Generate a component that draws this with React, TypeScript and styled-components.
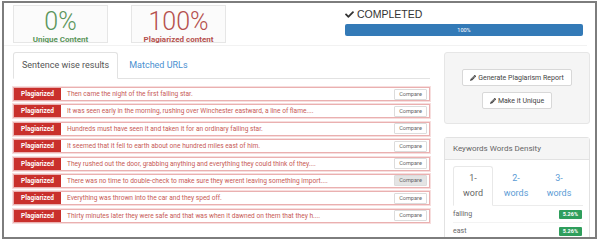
import React from "react";
import styled, { createGlobalStyle } from "styled-components";
import { FaCheck, FaPencilAlt } from "react-icons/fa";

const RED = "#c9302c";
const PINK = "#eab0b0";
const GREEN = "#5a955a";
const BLUE = "#337ab7";

const GlobalStyle = createGlobalStyle`
  html, body {
    margin: 0;
    padding: 0;
    background: #ffffff;
  }
  body {
    font-family: Roboto, "Liberation Sans", Arial, sans-serif;
    color: #555;
  }
`;

const Frame = styled.div`
  box-sizing: border-box;
  width: 595px;
  height: 238px;
  margin: 1px 0 0 2px;
  border: 2px solid #7d7d7d;
  overflow: hidden;
  background: #fff;
`;

const Header = styled.div`
  display: flex;
  align-items: flex-start;
  gap: 23px;
  height: 40px;
  padding: 2px 4px 0 9px;
  border-bottom: 1px solid #f2f2f2;
  margin-right: 8px;
`;

const StatBox = styled.div<{ $tone: string }>`
  box-sizing: border-box;
  width: 95px;
  height: 38px;
  border: 1px solid #e6e6e6;
  background: #fbfbfb;
  display: flex;
  flex-direction: column;
  align-items: center;
  color: ${(p) => p.$tone};
`;

const BigNum = styled.div`
  font-size: 25px;
  font-weight: 300;
  line-height: 25px;
  margin-top: 3px;
`;

const StatLabel = styled.div`
  font-size: 8px;
  font-weight: 700;
  line-height: 10px;
  margin-top: 1px;
`;

const Completed = styled.div`
  margin-left: auto;
  width: 238px;
  padding-top: 3px;
`;

const DoneTitle = styled.div`
  font-family: "Liberation Sans", Arial, sans-serif;
  font-size: 10.5px;
  line-height: 13px;
  color: #333;
  display: flex;
  align-items: center;
  gap: 3px;
`;

const Progress = styled.div`
  margin-top: 3px;
  height: 12px;
  border-radius: 2px;
  background: ${BLUE};
  color: #fff;
  font-size: 5.5px;
  line-height: 12px;
  text-align: center;
`;

const Main = styled.div`
  display: flex;
  gap: 14px;
  padding: 6px 3px 0 9px;
`;

const LeftCol = styled.div`
  width: 417px;
`;

const TabBar = styled.div`
  display: flex;
  border-bottom: 1px solid #e2e2e2;
  height: 26px;
`;

const Tab = styled.div<{ $active?: boolean }>`
  box-sizing: border-box;
  height: 27px;
  padding: 0 8px;
  font-size: 9px;
  line-height: 25px;
  margin-right: 2px;
  border: 1px solid ${(p) => (p.$active ? "#e2e2e2" : "transparent")};
  border-bottom-color: ${(p) => (p.$active ? "#fff" : "transparent")};
  background: ${(p) => (p.$active ? "#fff" : "transparent")};
  color: ${(p) => (p.$active ? "#555" : "#4a90d0")};
  border-radius: 3px 3px 0 0;
`;

const Rows = styled.div`
  display: flex;
  flex-direction: column;
  gap: 3.4px;
  margin-top: 8px;
`;

const Row = styled.div`
  box-sizing: border-box;
  height: 14px;
  display: flex;
  align-items: center;
  border: 1px solid ${PINK};
  box-shadow: 0 0 0 1px #f7dede;
  background: #fff;
`;

const Tag = styled.div`
  box-sizing: border-box;
  width: 47px;
  height: 100%;
  flex-shrink: 0;
  background: ${RED};
  color: #fff;
  font-size: 6.5px;
  font-weight: 700;
  line-height: 12px;
  text-align: center;
`;

const Sentence = styled.div`
  flex: 1;
  padding-left: 6px;
  font-size: 6.6px;
  color: #c75a56;
  white-space: nowrap;
  overflow: hidden;
`;

const CompareBtn = styled.div<{ $hover?: boolean }>`
  box-sizing: border-box;
  height: 11px;
  width: 33px;
  margin-right: 2px;
  border: 1px solid #dcdcdc;
  border-radius: 1px;
  background: ${(p) => (p.$hover ? "#e4e4e4" : "#fff")};
  color: #666;
  font-size: 5.6px;
  line-height: 9px;
  text-align: center;
`;

const RightCol = styled.div`
  width: 146px;
  display: flex;
  flex-direction: column;
  gap: 13px;
`;

const Well = styled.div`
  box-sizing: border-box;
  height: 72px;
  border: 1px solid #e6e6e6;
  border-radius: 3px;
  background: #f5f5f5;
  display: flex;
  flex-direction: column;
  align-items: center;
  padding-top: 16px;
  gap: 6px;
`;

const ActionBtn = styled.div`
  box-sizing: border-box;
  height: 17px;
  padding: 0 7px;
  display: flex;
  align-items: center;
  gap: 2px;
  background: #fff;
  border: 1px solid #d8d8d8;
  border-radius: 2px;
  font-size: 7px;
  color: #444;
`;

const Panel = styled.div`
  box-sizing: border-box;
  border: 1px solid #e2e2e2;
  border-radius: 3px;
  height: 120px;
`;

const PanelHead = styled.div`
  height: 21px;
  background: #f5f5f5;
  border-bottom: 1px solid #e2e2e2;
  padding-left: 8px;
  font-size: 8px;
  line-height: 21px;
  color: #666;
`;

const PanelBody = styled.div`
  padding: 6px 6px 0 8px;
`;

const KwTabs = styled.div`
  display: flex;
  border-bottom: 1px solid #ececec;
  height: 39px;
`;

const KwTab = styled.div<{ $active?: boolean }>`
  box-sizing: border-box;
  width: 40px;
  height: 40px;
  margin-right: 3px;
  padding-top: 4px;
  font-size: 9px;
  line-height: 15px;
  text-align: center;
  border: 1px solid ${(p) => (p.$active ? "#e8e8e8" : "transparent")};
  border-bottom-color: ${(p) => (p.$active ? "#fff" : "transparent")};
  border-radius: 3px 3px 0 0;
  background: ${(p) => (p.$active ? "#fff" : "transparent")};
  color: ${(p) => (p.$active ? "#666" : "#5b9bd5")};
`;

const KwRow = styled.div`
  display: flex;
  align-items: center;
  justify-content: space-between;
  height: 16px;
  font-size: 7px;
  color: #666;
  border-bottom: 1px solid #f3f3f3;
`;

const Badge = styled.span`
  background: #2f9e5c;
  color: #fff;
  font-size: 5.5px;
  font-weight: 700;
  line-height: 9px;
  padding: 0 4px;
  border-radius: 1px;
  margin-right: 1px;
`;

const sentences = [
  "Then came the night of the first falling star.",
  "It was seen early in the morning, rushing over Winchester eastward, a line of flame....",
  "Hundreds must have seen it and taken it for an ordinary falling star.",
  "It seemed that it fell to earth about one hundred miles east of him.",
  "They rushed out the door, grabbing anything and everything they could think of they....",
  "There was no time to double-check to make sure they werent leaving something import....",
  "Everything was thrown into the car and they sped off.",
  "Thirty minutes later they were safe and that was when it dawned on them that they h....",
];

export default function App() {
  return (
    <>
      <GlobalStyle />
      <Frame>
        <Header>
          <StatBox $tone={GREEN}>
            <BigNum>0%</BigNum>
            <StatLabel>Unique Content</StatLabel>
          </StatBox>
          <StatBox $tone="#b5504d">
            <BigNum>100%</BigNum>
            <StatLabel>Plagiarized content</StatLabel>
          </StatBox>
          <Completed>
            <DoneTitle>
              <FaCheck size={9} />
              COMPLETED
            </DoneTitle>
            <Progress>100%</Progress>
          </Completed>
        </Header>
        <Main>
          <LeftCol>
            <TabBar>
              <Tab $active>Sentence wise results</Tab>
              <Tab>Matched URLs</Tab>
            </TabBar>
            <Rows>
              {sentences.map((s, i) => (
                <Row key={i}>
                  <Tag>Plagiarized</Tag>
                  <Sentence>{s}</Sentence>
                  <CompareBtn $hover={i === 5}>Compare</CompareBtn>
                </Row>
              ))}
            </Rows>
          </LeftCol>
          <RightCol>
            <Well>
              <ActionBtn>
                <FaPencilAlt size={6} />
                Generate Plagiarism Report
              </ActionBtn>
              <ActionBtn>
                <FaPencilAlt size={6} />
                Make it Unique
              </ActionBtn>
            </Well>
            <Panel>
              <PanelHead>Keywords Words Density</PanelHead>
              <PanelBody>
                <KwTabs>
                  <KwTab $active>
                    1-
                    <br />
                    word
                  </KwTab>
                  <KwTab>
                    2-
                    <br />
                    words
                  </KwTab>
                  <KwTab>
                    3-
                    <br />
                    words
                  </KwTab>
                </KwTabs>
                <KwRow>
                  falling
                  <Badge>5.26%</Badge>
                </KwRow>
                <KwRow>
                  east
                  <Badge>5.26%</Badge>
                </KwRow>
              </PanelBody>
            </Panel>
          </RightCol>
        </Main>
      </Frame>
    </>
  );
}
